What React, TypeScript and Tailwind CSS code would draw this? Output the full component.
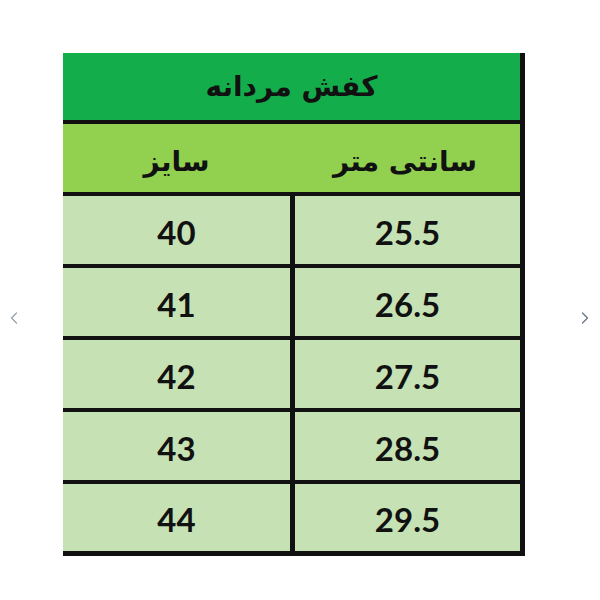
import { ChevronLeft, ChevronRight } from "lucide-react";

const rows = [
  { size: "40", cm: "25.5" },
  { size: "41", cm: "26.5" },
  { size: "42", cm: "27.5" },
  { size: "43", cm: "28.5" },
  { size: "44", cm: "29.5" },
];

const fa = { fontFamily: '"DejaVu Sans", "Noto Sans", sans-serif' };
const num = { fontFamily: 'Lato, "Open Sans", sans-serif' };

export default function App() {
  return (
    <div className="relative w-[600px] h-[600px] bg-white overflow-hidden">
      <ChevronLeft className="absolute left-[4px] top-[308px] h-[20px] w-[20px] text-gray-400" strokeWidth={1.5} />
      <ChevronRight className="absolute right-[5px] top-[308px] h-[20px] w-[20px] text-gray-500" strokeWidth={1.5} />

      <div className="pt-[53px] pl-[63px]">
        <div className="w-[462px] border-r-[5px] border-b-[5px] border-[#111]">
          <div
            className="h-[71px] flex items-center justify-center bg-[#14ad4c] border-b-[4px] border-[#111] text-[28px] font-bold text-[#111]"
            style={fa}
            dir="rtl"
          >
            کفش مردانه
          </div>
          <div className="h-[72px] flex bg-[#92d050] border-b-[4px] border-[#111] text-[28px] font-bold text-[#111] pt-[8px]" style={fa}>
            <div className="w-[227px] flex items-center justify-center" dir="rtl">سایز</div>
            <div className="flex-1 flex items-center justify-center" dir="rtl">سانتی متر</div>
          </div>
          {rows.map((r, i) => (
            <div
              key={r.size}
              className={`flex bg-[#c6e2b5] text-[33px] font-bold text-[#111] ${i < rows.length - 1 ? "h-[72px] border-b-[4px] border-[#111]" : "h-[67px]"}`}
              style={num}
            >
              <div className="w-[227px] flex items-center justify-center pt-[5px]">{r.size}</div>
              <div className="flex-1 flex items-center justify-center pt-[5px] border-l-[5px] border-[#111]">{r.cm}</div>
            </div>
          ))}
        </div>
      </div>
    </div>
  );
}
